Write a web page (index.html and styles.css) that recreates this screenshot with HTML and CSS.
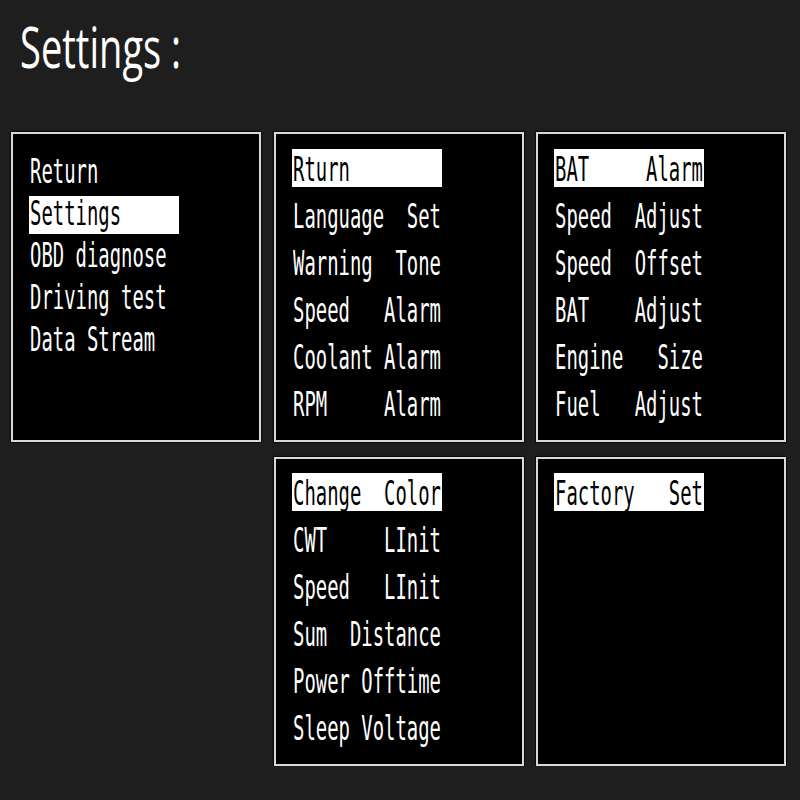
FILE: index.html
```html
<!DOCTYPE html>
<html lang="en">
<head>
    <meta charset="UTF-8">
    <meta name="viewport" content="width=device-width, initial-scale=1.0">
    <title>Settings</title>
    <link rel="stylesheet" href="styles.css">
</head>
<body>

<h1 class="title"><span>Settings :</span></h1>

<div class="screens">
    <!-- main menu -->
    <div class="screen main">
        <div class="item"><span>Return</span></div>
        <div class="item active"><span>Settings</span></div>
        <div class="item"><span>OBD diagnose</span></div>
        <div class="item"><span>Driving test</span></div>
        <div class="item"><span>Data Stream</span></div>
    </div>

    <!-- settings page 1 -->
    <div class="screen">
        <div class="item active"><span>Rturn</span></div>
        <div class="item"><span>Language  Set</span></div>
        <div class="item"><span>Warning  Tone</span></div>
        <div class="item"><span>Speed   Alarm</span></div>
        <div class="item"><span>Coolant Alarm</span></div>
        <div class="item"><span>RPM     Alarm</span></div>
    </div>

    <!-- settings page 2 -->
    <div class="screen">
        <div class="item active"><span>BAT     Alarm</span></div>
        <div class="item"><span>Speed  Adjust</span></div>
        <div class="item"><span>Speed  Offset</span></div>
        <div class="item"><span>BAT    Adjust</span></div>
        <div class="item"><span>Engine   Size</span></div>
        <div class="item"><span>Fuel   Adjust</span></div>
    </div>

    <!-- settings page 3 -->
    <div class="screen second-row col-2">
        <div class="item active"><span>Change  Color</span></div>
        <div class="item"><span>CWT     LInit</span></div>
        <div class="item"><span>Speed   LInit</span></div>
        <div class="item"><span>Sum  Distance</span></div>
        <div class="item"><span>Power Offtime</span></div>
        <div class="item"><span>Sleep Voltage</span></div>
    </div>

    <!-- settings page 4 -->
    <div class="screen second-row col-3">
        <div class="item active"><span>Factory   Set</span></div>
    </div>
</div>

</body>
</html>
```

FILE: styles.css
```css
/* dark page behind the screen captures */
body {
    margin: 0;
    background-color: #1e1e1e;
    color: #fff;
}

.title {
    margin: 0;
    height: 132px;
    padding-left: 20px;
    font-family: "Open Sans", "Noto Sans", sans-serif;
    font-weight: 400;
    font-size: 56px;
    line-height: 1;
}
.title span {
    display: inline-block;
    padding-top: 18px;
    transform: scaleX(0.68);
    transform-origin: left top;
}

.screens {
    display: grid;
    grid-template-columns: repeat(3, 250px);
    grid-template-rows: 310px 309px;
    column-gap: 12.5px;
    row-gap: 15px;
    padding-left: 11px;
}

.screen {
    display: flex;
    flex-direction: column;
    gap: 9px;
    padding: 15px 0 0 16px;
    background-color: #000;
    border: 2px solid #d8d8d8;
    box-shadow: 0 0 1px 1px rgba(0, 0, 0, 0.6), inset 0 0 1px 1px rgba(0, 0, 0, 0.6);
}
.screen.main {
    gap: 4px;
    padding-top: 20px;
}
.second-row {
    grid-row: 2;
    padding-top: 14px;
}
.col-2 {
    grid-column: 2;
}
.col-3 {
    grid-column: 3;
}

/* one menu line, fixed width so the highlight bar lines up */
.item {
    width: 150px;
    height: 38px;
    padding: 3px 0 0 1px;
    box-sizing: border-box;
    font-family: "DejaVu Sans Mono", monospace;
    font-size: 34px;
    line-height: 34px;
    white-space: pre;
}
.main .item {
    padding-top: 0;
}
.item span {
    display: inline-block;
    transform: scaleX(0.556);
    transform-origin: left center;
}
.item.active {
    background-color: #fff;
    color: #000;
}
```
